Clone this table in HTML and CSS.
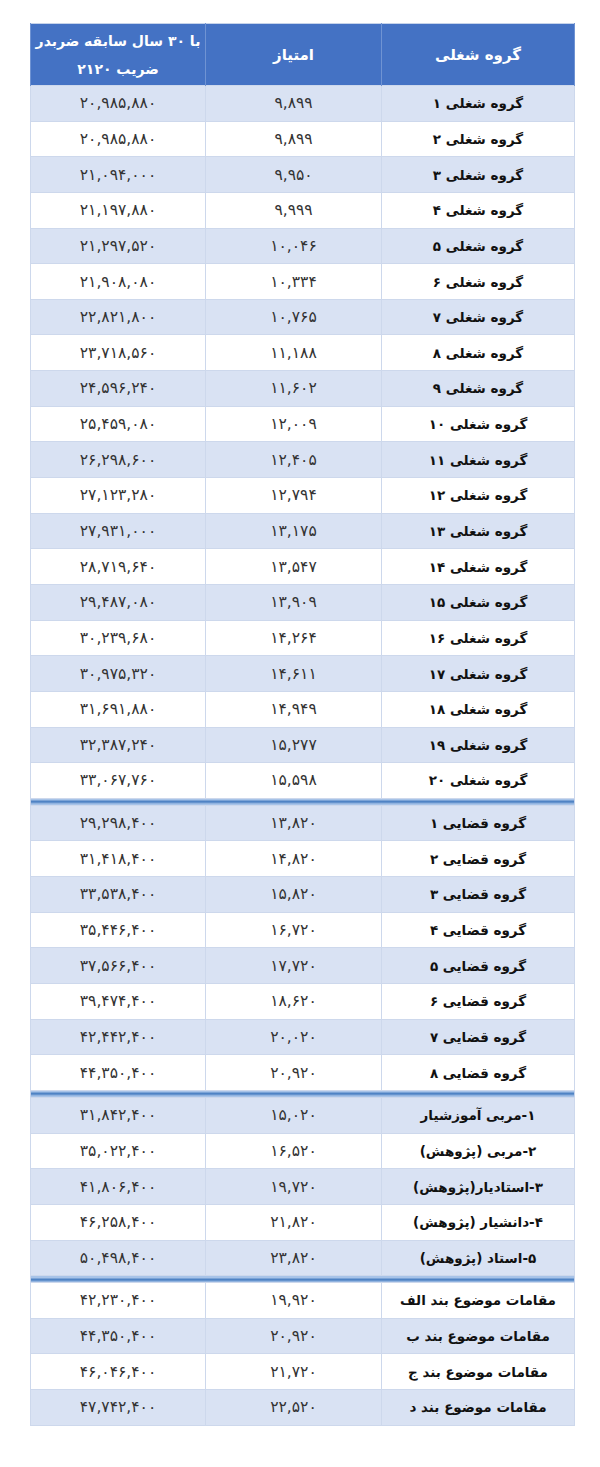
FILE: index.html
```html
<!DOCTYPE html>
<html lang="fa">
<head>
<meta charset="utf-8">
<title>جدول حقوق</title>
<link rel="stylesheet" href="styles.css">
</head>
<body>
<div class="page">
<table class="grid" dir="rtl">
<colgroup><col class="c-name"><col class="c-score"><col class="c-pay"></colgroup>
<thead>
<tr><th class="big">گروه شغلی</th><th class="big">امتیاز</th><th>با ۳۰ سال سابقه ضربدر<br>ضریب ۲۱۲۰</th></tr>
</thead>
<tbody>
<tr><td>گروه شغلی ۱</td><td>۹,۸۹۹</td><td>۲۰,۹۸۵,۸۸۰</td></tr>
<tr><td>گروه شغلی ۲</td><td>۹,۸۹۹</td><td>۲۰,۹۸۵,۸۸۰</td></tr>
<tr><td>گروه شغلی ۳</td><td>۹,۹۵۰</td><td>۲۱,۰۹۴,۰۰۰</td></tr>
<tr><td>گروه شغلی ۴</td><td>۹,۹۹۹</td><td>۲۱,۱۹۷,۸۸۰</td></tr>
<tr><td>گروه شغلی ۵</td><td>۱۰,۰۴۶</td><td>۲۱,۲۹۷,۵۲۰</td></tr>
<tr><td>گروه شغلی ۶</td><td>۱۰,۳۳۴</td><td>۲۱,۹۰۸,۰۸۰</td></tr>
<tr><td>گروه شغلی ۷</td><td>۱۰,۷۶۵</td><td>۲۲,۸۲۱,۸۰۰</td></tr>
<tr><td>گروه شغلی ۸</td><td>۱۱,۱۸۸</td><td>۲۳,۷۱۸,۵۶۰</td></tr>
<tr><td>گروه شغلی ۹</td><td>۱۱,۶۰۲</td><td>۲۴,۵۹۶,۲۴۰</td></tr>
<tr><td>گروه شغلی ۱۰</td><td>۱۲,۰۰۹</td><td>۲۵,۴۵۹,۰۸۰</td></tr>
<tr><td>گروه شغلی ۱۱</td><td>۱۲,۴۰۵</td><td>۲۶,۲۹۸,۶۰۰</td></tr>
<tr><td>گروه شغلی ۱۲</td><td>۱۲,۷۹۴</td><td>۲۷,۱۲۳,۲۸۰</td></tr>
<tr><td>گروه شغلی ۱۳</td><td>۱۳,۱۷۵</td><td>۲۷,۹۳۱,۰۰۰</td></tr>
<tr><td>گروه شغلی ۱۴</td><td>۱۳,۵۴۷</td><td>۲۸,۷۱۹,۶۴۰</td></tr>
<tr><td>گروه شغلی ۱۵</td><td>۱۳,۹۰۹</td><td>۲۹,۴۸۷,۰۸۰</td></tr>
<tr><td>گروه شغلی ۱۶</td><td>۱۴,۲۶۴</td><td>۳۰,۲۳۹,۶۸۰</td></tr>
<tr><td>گروه شغلی ۱۷</td><td>۱۴,۶۱۱</td><td>۳۰,۹۷۵,۳۲۰</td></tr>
<tr><td>گروه شغلی ۱۸</td><td>۱۴,۹۴۹</td><td>۳۱,۶۹۱,۸۸۰</td></tr>
<tr><td>گروه شغلی ۱۹</td><td>۱۵,۲۷۷</td><td>۳۲,۳۸۷,۲۴۰</td></tr>
<tr><td>گروه شغلی ۲۰</td><td>۱۵,۵۹۸</td><td>۳۳,۰۶۷,۷۶۰</td></tr>
<tr class="sep"><td colspan="3"></td></tr>
<tr class="alt"><td>گروه قضایی ۱</td><td>۱۳,۸۲۰</td><td>۲۹,۲۹۸,۴۰۰</td></tr>
<tr><td>گروه قضایی ۲</td><td>۱۴,۸۲۰</td><td>۳۱,۴۱۸,۴۰۰</td></tr>
<tr class="alt"><td>گروه قضایی ۳</td><td>۱۵,۸۲۰</td><td>۳۳,۵۳۸,۴۰۰</td></tr>
<tr><td>گروه قضایی ۴</td><td>۱۶,۷۲۰</td><td>۳۵,۴۴۶,۴۰۰</td></tr>
<tr class="alt"><td>گروه قضایی ۵</td><td>۱۷,۷۲۰</td><td>۳۷,۵۶۶,۴۰۰</td></tr>
<tr><td>گروه قضایی ۶</td><td>۱۸,۶۲۰</td><td>۳۹,۴۷۴,۴۰۰</td></tr>
<tr class="alt"><td>گروه قضایی ۷</td><td>۲۰,۰۲۰</td><td>۴۲,۴۴۲,۴۰۰</td></tr>
<tr><td>گروه قضایی ۸</td><td>۲۰,۹۲۰</td><td>۴۴,۳۵۰,۴۰۰</td></tr>
<tr class="sep"><td colspan="3"></td></tr>
<tr class="alt"><td>۱-مربی آموزشیار</td><td>۱۵,۰۲۰</td><td>۳۱,۸۴۲,۴۰۰</td></tr>
<tr><td>۲-مربی (پژوهش)</td><td>۱۶,۵۲۰</td><td>۳۵,۰۲۲,۴۰۰</td></tr>
<tr class="alt"><td>۳-استادیار(پژوهش)</td><td>۱۹,۷۲۰</td><td>۴۱,۸۰۶,۴۰۰</td></tr>
<tr><td>۴-دانشیار (پژوهش)</td><td>۲۱,۸۲۰</td><td>۴۶,۲۵۸,۴۰۰</td></tr>
<tr class="alt"><td>۵-استاد (پژوهش)</td><td>۲۳,۸۲۰</td><td>۵۰,۴۹۸,۴۰۰</td></tr>
<tr class="sep"><td colspan="3"></td></tr>
<tr><td>مقامات موضوع بند الف</td><td>۱۹,۹۲۰</td><td>۴۲,۲۳۰,۴۰۰</td></tr>
<tr class="alt"><td>مقامات موضوع بند ب</td><td>۲۰,۹۲۰</td><td>۴۴,۳۵۰,۴۰۰</td></tr>
<tr><td>مقامات موضوع بند ج</td><td>۲۱,۷۲۰</td><td>۴۶,۰۴۶,۴۰۰</td></tr>
<tr class="alt"><td>مقامات موضوع بند د</td><td>۲۲,۵۲۰</td><td>۴۷,۷۴۲,۴۰۰</td></tr>
</tbody>
</table>
</div>
</body>
</html>
```

FILE: styles.css
```css
html, body {
  margin: 0;
  padding: 0;
  background: #ffffff;
}

.page {
  padding: 23px 0 0 30px;
  font-family: "DejaVu Sans", "Noto Sans", sans-serif;
}

.grid {
  width: 544px;
  border-collapse: collapse;
  table-layout: fixed;
  border: 1px solid #c6d3ea;
}

.c-name { width: 193px; }
.c-score { width: 176px; }
.c-pay { width: 175px; }

.grid th {
  height: 61px;
  padding: 0 4px;
  background: #4472c4;
  color: #ffffff;
  font-weight: bold;
  font-size: 14px;
  line-height: 28px;
  text-align: center;
  border-left: 1px solid #6f93d3;
  border-right: 1px solid #6f93d3;
}

.grid th.big {
  font-size: 15px;
}

.grid td {
  height: 34.65px;
  padding: 0;
  text-align: center;
  vertical-align: middle;
  font-size: 15.5px;
  color: #333333;
  border: 1px solid #cdd8ec;
}

.grid td:first-child {
  font-weight: bold;
  font-size: 13.5px;
  color: #111111;
}

/* first group: odd rows tinted */
.grid tbody tr:nth-child(-n+20):nth-child(odd) td {
  background: #d9e2f3;
}

.grid tbody tr.alt td {
  background: #d9e2f3;
}

.grid tr.sep td {
  height: 6px;
  padding: 0;
  border-left: none;
  border-right: none;
  background: linear-gradient(#a7c3e8 0%, #a7c3e8 25%, #4f83c4 35%, #4f83c4 70%, #a7c3e8 80%, #a7c3e8 100%);
}
```
